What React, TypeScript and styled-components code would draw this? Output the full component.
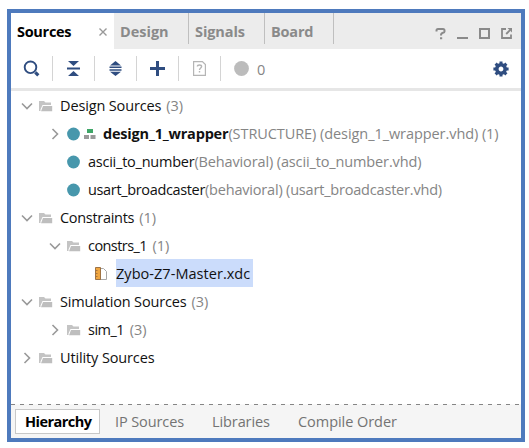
import React from "react";
import styled, { createGlobalStyle } from "styled-components";

const GlobalStyle = createGlobalStyle`
  body {
    margin: 0;
    background: #fff;
    font-family: "Open Sans", "Noto Sans", sans-serif;
    font-size: 14.5px;
    color: #111;
  }
`;

const Page = styled.main`
  box-sizing: border-box;
  width: 529px;
  height: 448px;
  padding: 9px 4px 6px 7px;
  overflow: hidden;
`;

const Panel = styled.section`
  box-sizing: border-box;
  height: 433px;
  display: flex;
  flex-direction: column;
  border: 4px solid #4e7abd;
  background: #fff;
`;

const Label = styled.span<{ $ls?: number; $bold?: boolean; $muted?: boolean }>`
  white-space: pre;
  line-height: 20px;
  letter-spacing: ${(p) => p.$ls ?? 0}px;
  font-weight: ${(p) => (p.$bold ? 700 : 400)};
  color: ${(p) => (p.$muted ? "#858585" : "inherit")};
`;

const Icon = styled.svg`
  display: block;
  flex: none;
`;

const TabBar = styled.header`
  height: 36px;
  flex: none;
  display: flex;
  background: #ececec;
`;

const Tab = styled.div<{ $width: number; $active?: boolean }>`
  box-sizing: border-box;
  width: ${(p) => p.$width}px;
  height: ${(p) => (p.$active ? 36 : 31)}px;
  padding: 9px 0 0 6px;
  display: flex;
  justify-content: space-between;
  background: ${(p) => (p.$active ? "#fff" : "transparent")};
  color: ${(p) => (p.$active ? "#000" : "#8a8a8a")};
  border-right: ${(p) => (p.$active ? "none" : "1px solid #bfbfbf")};
`;

const CloseIcon = styled(Icon)`
  margin: 6px 7px 0 0;
`;

const WindowControls = styled.div`
  margin-left: auto;
  padding: 14px 9px 0 0;
  display: flex;
  gap: 11px;
`;

const Toolbar = styled.div`
  box-sizing: border-box;
  height: 42px;
  flex: none;
  display: flex;
  padding: 7px 12px 0 0;
  border-bottom: 3px solid #e6e6e6;
`;

const ToolButton = styled.div`
  box-sizing: border-box;
  width: 42px;
  height: 25px;
  display: flex;
  align-items: center;
  justify-content: center;
  border-right: 1px solid #d4d4d4;
`;

const Messages = styled.div`
  height: 25px;
  display: flex;
  align-items: center;
  gap: 8px;
  padding-left: 13px;
`;

const MessageCount = styled.span`
  display: flex;
  padding-top: 2px;
`;

const Settings = styled.div`
  height: 25px;
  display: flex;
  align-items: center;
  margin-left: auto;
`;

const Tree = styled.div`
  flex: 1;
`;

const Row = styled.div<{ $depth: number }>`
  height: 28px;
  display: flex;
  align-items: center;
  padding-left: ${(p) => 9 + p.$depth * 28}px;
`;

const Arrow = styled.span`
  width: 19px;
  padding-top: 2px;
  flex: none;
`;

const Glyphs = styled.span<{ $width: number; $drop?: boolean }>`
  width: ${(p) => p.$width}px;
  padding-top: ${(p) => (p.$drop ? 2 : 0)}px;
  flex: none;
  display: flex;
  align-items: center;
  gap: 4px;
`;

const Name = styled.span<{ $selected?: boolean }>`
  box-sizing: border-box;
  height: 28px;
  padding-top: 2px;
  display: flex;
  align-items: center;
  padding-right: ${(p) => (p.$selected ? 3 : 0)}px;
  background: ${(p) => (p.$selected ? "#cbdcfb" : "transparent")};
`;

const Detail = styled.span<{ $gap: number }>`
  margin-left: ${(p) => p.$gap}px;
  padding-top: 2px;
  display: flex;
`;

const Footer = styled.footer`
  height: 34px;
  flex: none;
  background: #f5f5f5;
`;

const DashedRule = styled.div`
  height: 1px;
  background: repeating-linear-gradient(90deg, #858585 0 4px, #f8f8f8 4px 9px);
`;

const ViewTabs = styled.div`
  display: flex;
  align-items: flex-start;
  padding: 4px 0 0 4px;
`;

const ViewTab = styled.div<{ $width: number; $active?: boolean }>`
  box-sizing: border-box;
  width: ${(p) => p.$width}px;
  height: 25px;
  padding: 1px 0 0 ${(p) => (p.$active ? 9 : 14)}px;
  display: flex;
  align-items: center;
  border: 1px solid ${(p) => (p.$active ? "#c8c8c8" : "transparent")};
  background: ${(p) => (p.$active ? "#fff" : "transparent")};
  color: ${(p) => (p.$active ? "#000" : "#737373")};
`;

const NAVY = "#2f4d80";

const Chevron = ({ open }: { open: boolean }) => (
  <Icon width="14" height="14" viewBox="0 0 14 14" fill="none" stroke="#999" strokeWidth="1.6">
    <path d={open ? "M2 4.5 7 9.5 12 4.5" : "M4.5 2 9.5 7 4.5 12"} />
  </Icon>
);

const Folder = () => (
  <Icon width="14" height="12" viewBox="0 0 14 12">
    <path d="M0 1H5L6.5 2.5H12V5H3.5L1.5 9.5V11H0Z" fill="#c4c4c4" />
    <path d="M4 6H13.2V11.2H2Z" fill="#bebebe" />
  </Icon>
);

const Dot = () => (
  <Icon width="13" height="14" viewBox="0 0 13 14">
    <circle cx="6.5" cy="7" r="6.4" fill="#4797ac" />
  </Icon>
);

const Blocks = () => (
  <Icon width="12" height="10" viewBox="0 0 12 10">
    <path d="M3 0H9V4H3Z" fill="#3fa668" />
    <path d="M0 6H5V10H0ZM6.5 6H11.5V10H6.5Z" fill="#9a9a9a" />
  </Icon>
);

const ConstraintFile = () => (
  <Icon width="12" height="14" viewBox="0 0 12 14">
    <path d="M5 1.5H8.5L11.5 4.5V12.5H5" fill="#fff" stroke="#a8a8a8" />
    <path d="M.5 .5H5.5V12.5H.5Z" fill="#f0a640" stroke="#94683a" strokeWidth=".9" />
    <path d="M1 3.5H2.5M1 6.5H2.5M1 9.5H2.5" stroke="#94683a" strokeWidth=".8" />
  </Icon>
);

type Kind = "folder" | "module" | "top" | "file";

interface Node {
  depth: number;
  kind: Kind;
  open?: boolean;
  name: string;
  ls: number;
  detail?: string;
  detailLs?: number;
  gap?: number;
}

const nodes: Node[] = [
  { depth: 0, kind: "folder", open: true, name: "Design Sources", ls: -0.14, detail: "(3)", gap: 5 },
  { depth: 1, kind: "top", open: false, name: "design_1_wrapper", ls: -0.2, detail: "(STRUCTURE) (design_1_wrapper.vhd) (1)", detailLs: -0.07, gap: 0 },
  { depth: 1, kind: "module", name: "ascii_to_number", ls: -0.24, detail: "(Behavioral) (ascii_to_number.vhd)", detailLs: -0.13, gap: 0 },
  { depth: 1, kind: "module", name: "usart_broadcaster", ls: -0.35, detail: "(behavioral) (usart_broadcaster.vhd)", detailLs: -0.19, gap: 0 },
  { depth: 0, kind: "folder", open: true, name: "Constraints", ls: -0.3, detail: "(1)", gap: 5 },
  { depth: 1, kind: "folder", open: true, name: "constrs_1", ls: -0.57, detail: "(1)", gap: 5.5 },
  { depth: 2, kind: "file", name: "Zybo-Z7-Master.xdc", ls: 0.04 },
  { depth: 0, kind: "folder", open: true, name: "Simulation Sources", ls: -0.16, detail: "(3)", gap: 5 },
  { depth: 1, kind: "folder", open: false, name: "sim_1", ls: -0.5, detail: "(3)", gap: 5.5 },
  { depth: 0, kind: "folder", open: false, name: "Utility Sources", ls: -0.13 },
];

const glyphWidth: Record<Kind, number> = { folder: 21, module: 21, top: 36, file: 21 };

const TreeRow = ({ node }: { node: Node }) => (
  <Row $depth={node.depth}>
    <Arrow>{node.open !== undefined && <Chevron open={node.open} />}</Arrow>
    <Glyphs $width={glyphWidth[node.kind]} $drop>
      {node.kind === "folder" && <Folder />}
      {(node.kind === "module" || node.kind === "top") && <Dot />}
      {node.kind === "top" && <Blocks />}
      {node.kind === "file" && <ConstraintFile />}
    </Glyphs>
    <Name $selected={node.kind === "file"}>
      <Label $ls={node.ls} $bold={node.kind === "top"}>{node.name}</Label>
    </Name>
    {node.detail && (
      <Detail $gap={node.gap ?? 0}>
        <Label $muted $ls={node.detailLs}>{node.detail}</Label>
      </Detail>
    )}
  </Row>
);

export default function App() {
  return (
    <>
      <GlobalStyle />
      <Page>
        <Panel>
          <TabBar>
            <Tab $width={103} $active>
              <Label $bold $ls={-0.3}>Sources</Label>
              <CloseIcon width="8" height="8" viewBox="0 0 8 8" stroke="#999" strokeWidth="1.4">
                <path d="M.5 .5 7.5 7.5M7.5 .5 .5 7.5" />
              </CloseIcon>
            </Tab>
            <Tab $width={75}><Label $bold>Design</Label></Tab>
            <Tab $width={76}><Label $bold $ls={-0.1}>Signals</Label></Tab>
            <Tab $width={69}><Label $bold $ls={-0.2}>Board</Label></Tab>
            <WindowControls>
              <Icon width="11" height="13" viewBox="0 0 11 13" fill="none" stroke="#8a8a8a" strokeWidth="2">
                <path d="M1.5 4.5V3.5Q1.5 2 3 2H8Q9.5 2 9.5 3.5V4.5Q9.5 5.5 8 5.8 6 6.2 6 8.5M5 11.2H7.2" />
              </Icon>
              <Icon width="11" height="13" viewBox="0 0 11 13">
                <path d="M0 10H11V12H0Z" fill="#8a8a8a" />
              </Icon>
              <Icon width="11" height="13" viewBox="0 0 11 13" fill="none" stroke="#8a8a8a" strokeWidth="2">
                <path d="M1 2H10V11H1Z" />
              </Icon>
              <Icon width="11" height="13" viewBox="0 0 11 13" fill="none" stroke="#8a8a8a" strokeWidth="1.8">
                <path d="M5 2H1V11H10V7.5M5.2 7 9 3.2" />
                <path d="M6.5 1H11V5.5Z" fill="#8a8a8a" stroke="none" />
              </Icon>
            </WindowControls>
          </TabBar>
          <Toolbar>
            <ToolButton>
              <Icon width="17" height="17" viewBox="0 0 17 17" fill="none" stroke={NAVY} strokeWidth="1.9">
                <circle cx="7.5" cy="7.3" r="5.8" />
                <path d="M12.3 12.3 15.3 15.3" strokeWidth="3.2" />
              </Icon>
            </ToolButton>
            <ToolButton>
              <Icon width="13" height="15" viewBox="0 0 13 15" fill={NAVY}>
                <path d="M1 0H12L6.5 5ZM0 6.5H13V8.5H0ZM6.5 10 12 15H1Z" />
              </Icon>
            </ToolButton>
            <ToolButton>
              <Icon width="13" height="15" viewBox="0 0 13 15" fill={NAVY}>
                <path d="M6.5 0 12 4.5H1ZM.5 5.5H12.5V7H.5ZM.5 8.2H12.5V9.7H.5ZM1 10.7H12L6.5 15Z" />
              </Icon>
            </ToolButton>
            <ToolButton>
              <Icon width="15" height="15" viewBox="0 0 15 15" fill={NAVY}>
                <path d="M6 0H9V6H15V9H9V15H6V9H0V6H6Z" />
              </Icon>
            </ToolButton>
            <ToolButton>
              <Icon width="13" height="15" viewBox="0 0 13 15" fill="none" stroke="#b5b5b5" strokeWidth="1.2">
                <path d="M.6 .6H9.4L12.4 3.6V14.4H.6Z" />
                <path d="M4.4 5.6C4.4 3.4 8.6 3.4 8.6 5.6 8.6 7 6.5 7 6.5 9M6.5 10V11.4" strokeWidth="1.4" />
              </Icon>
            </ToolButton>
            <Messages>
              <Icon width="15" height="15" viewBox="0 0 15 15">
                <circle cx="7.5" cy="7.5" r="7.4" fill="#bcbcbc" />
              </Icon>
              <MessageCount><Label $muted>0</Label></MessageCount>
            </Messages>
            <Settings>
              <Icon width="16" height="16" viewBox="-8 -8 16 16" fill="none" stroke={NAVY}>
                <circle r="4.2" strokeWidth="3.6" />
                <path d="M0-7.6V-5M0 5V7.6M-7.6 0H-5M5 0H7.6M-5.4-5.4-3.6-3.6M3.6 3.6 5.4 5.4M5.4-5.4 3.6-3.6M-3.6 3.6-5.4 5.4" strokeWidth="3" />
              </Icon>
            </Settings>
          </Toolbar>
          <Tree>
            {nodes.map((node) => <TreeRow key={node.name} node={node} />)}
          </Tree>
          <Footer>
            <DashedRule />
            <ViewTabs>
              <ViewTab $width={85} $active><Label $bold $ls={-0.53}>Hierarchy</Label></ViewTab>
              <ViewTab $width={97}><Label $ls={-0.1}>IP Sources</Label></ViewTab>
              <ViewTab $width={86}><Label $ls={-0.1}>Libraries</Label></ViewTab>
              <ViewTab $width={130}><Label $ls={-0.05}>Compile Order</Label></ViewTab>
            </ViewTabs>
          </Footer>
        </Panel>
      </Page>
    </>
  );
}
